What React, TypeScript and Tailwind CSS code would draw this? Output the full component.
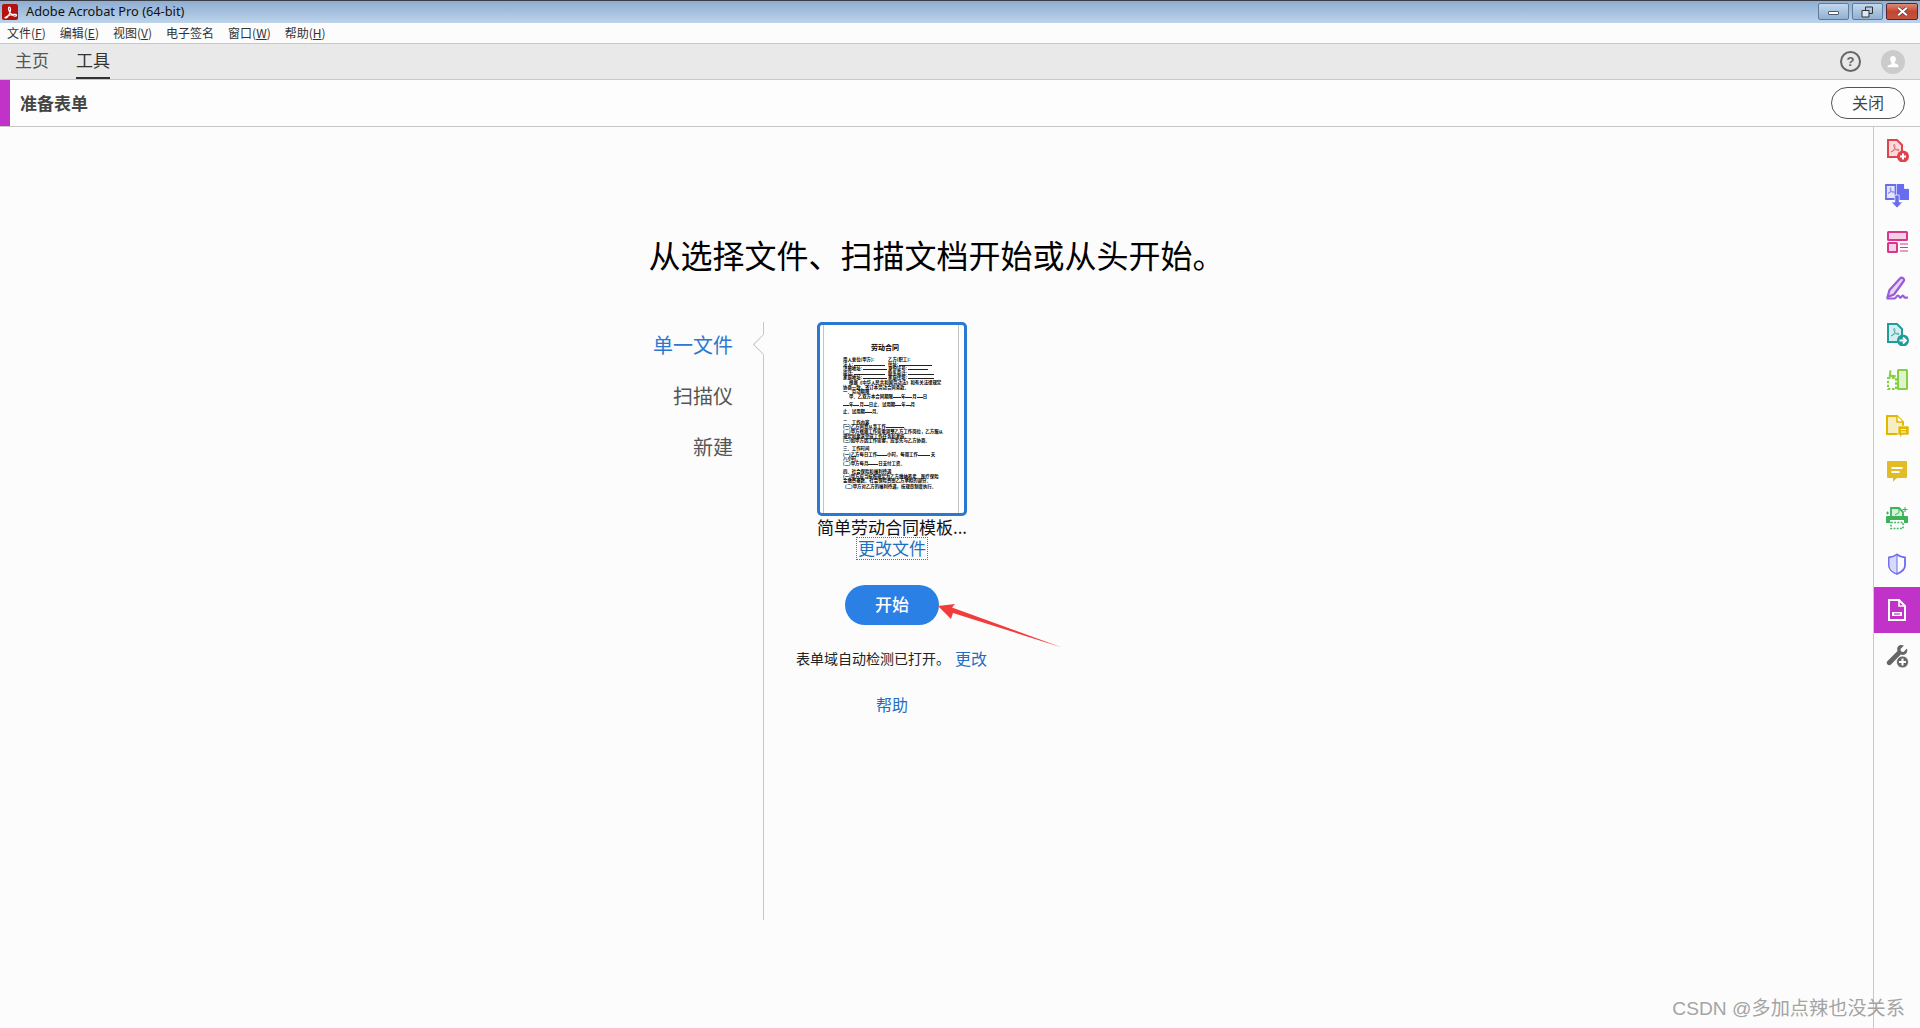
import React from "react";

const cjk = "font-['Noto_Sans_CJK_SC','Noto_Sans',sans-serif]";

const AcroGlyph = ({ color = "#fff", x = 0, y = 0, s = 1, w = 1 }: { color?: string; x?: number; y?: number; s?: number; w?: number }) => (
  <path
    transform={`translate(${x} ${y}) scale(${s})`}
    d="M1 12.5c1.5 1.5 3.5-1 5-4.5 1-2.5 1.3-5.5.3-6.5-1-.8-1.8.6-1.2 2.5.8 2.6 3 5.5 5 6.5 1.5.7 3.4.6 3.4-.4 0-1-2-1.3-4.2-1-2.6.4-6.2 1.6-8.3 3.4z"
    fill="none"
    stroke={color}
    strokeWidth={w}
  />
);

const railIcons: React.ReactNode[] = [
  // create pdf
  <svg key="1" viewBox="0 0 24 24" className="w-6 h-6">
    <path d="M3 2h9l5 5v12H3z" fill="#f9dcde" stroke="#e2434b" strokeWidth="2" />
    <AcroGlyph color="#e2434b" x={5.5} y={5.5} s={0.65} w={1} />
    <circle cx="18" cy="18.5" r="6" fill="#e2434b" />
    <path d="M18 15.5v6M15 18.5h6" stroke="#fff" strokeWidth="2" />
  </svg>,
  // combine
  <svg key="2" viewBox="0 0 24 24" className="w-6 h-6">
    <path d="M1 1h9.500v14H1z" fill="#e4e4fc" stroke="#6a6cf0" strokeWidth="1.800" />
    <AcroGlyph color="#6a6cf0" x={2.500} y={3} s={0.5} w={1.300} />
    <path d="M12 0h7l5 5v11H12z" fill="#6a6cf0" />
    <path d="M19.500 0v4.500H24" fill="#fff" stroke="#fff" strokeWidth="0.800" />
    <path d="M9.800 11h4.400v7h3.500L12 24l-5.700-6h3.500z" fill="#6a6cf0" stroke="#fff" strokeWidth="0.700" />
  </svg>,
  // forms
  <svg key="3" viewBox="0 0 24 24" className="w-6 h-6">
    <rect x="3" y="2" width="19" height="8" rx="0.5" fill="#f5cfe4" stroke="#d8368f" strokeWidth="2" />
    <rect x="3" y="13" width="9" height="9" rx="0.5" fill="#f5cfe4" stroke="#d8368f" strokeWidth="2" />
    <path d="M15 14h8M15 17.5h8M15 21h8" stroke="#d8368f" strokeWidth="1.2" />
  </svg>,
  // sign
  <svg key="4" viewBox="0 0 24 24" className="w-6 h-6">
    <path d="M2.5 21l2-7L15 2.500c1-1 2.200-1 3.200-.2 1 .9 1 2.200.2 3.200L9 18.500z" fill="#e6d4f7" stroke="#9a5bd8" strokeWidth="2.200" strokeLinejoin="round" />
    <path d="M1.500 22.500h8c1.500 0 2-3 3.500-3s1 2.200 2.200 2.200 1.500-2.200 2.700-2.200.8 2.200 2 2.200h3" fill="none" stroke="#9a5bd8" strokeWidth="2.200" />
  </svg>,
  // export
  <svg key="5" viewBox="0 0 24 24" className="w-6 h-6">
    <path d="M3 2h9l5 5v13H3z" fill="#d6eeee" stroke="#1f9c9c" strokeWidth="2" />
    <AcroGlyph color="#1f9c9c" x={5.5} y={5.5} s={0.65} w={1} />
    <circle cx="18" cy="18.5" r="6" fill="#1f9c9c" />
    <path d="M14.500 18.500h6M18 15.500l3 3-3 3" stroke="#fff" strokeWidth="1.800" fill="none" />
  </svg>,
  // organize
  <svg key="6" viewBox="0 0 24 24" className="w-6 h-6">
    <rect x="13" y="2" width="9" height="19" rx="0.5" fill="#dff3cf" stroke="#84d040" strokeWidth="2" />
    <path d="M3 10h8v11H3z" fill="none" stroke="#84d040" strokeWidth="2" strokeDasharray="2.500 1.600" />
    <path d="M11 7.500H5.500M5 2.500v5.500h5.500" fill="none" stroke="#84d040" strokeWidth="2" transform="rotate(8 6 6)" />
  </svg>,
  // pdf comment doc
  <svg key="7" viewBox="0 0 24 24" className="w-6 h-6">
    <path d="M2 2h10l6 6v12H2z" fill="#f6edc4" stroke="#e0b800" strokeWidth="2" />
    <path d="M12 2v6h6" fill="#fff" stroke="#e0b800" strokeWidth="1.500" />
    <path d="M13 12h11v9h-7l-2 3v-3h-2z" fill="#e0b800" stroke="#fff" strokeWidth="0.600" />
    <path d="M16 15.500h5M16 18h5" stroke="#fff" strokeWidth="1" />
  </svg>,
  // comment
  <svg key="8" viewBox="0 0 24 24" className="w-6 h-6">
    <path d="M3 2h18a1 1 0 0 1 1 1v16a1 1 0 0 1-1 1h-9l-4 4v-4H3a1 1 0 0 1-1-1V3a1 1 0 0 1 1-1z" fill="#e2bc24" transform="translate(0 -1) scale(1 0.95)" />
    <path d="M6.500 8h11M6.500 12h8" stroke="#fff" strokeWidth="2" />
  </svg>,
  // print production
  <svg key="9" viewBox="0 0 24 24" className="w-6 h-6">
    <path d="M6 11V2h8l4 4v5" fill="#d6f0da" stroke="#3cb35a" strokeWidth="1.800" />
    <path d="M14 2v4.500L10 9" stroke="#3cb35a" strokeWidth="1" fill="none" />
    <path d="M2 10h20a1 1 0 0 1 1 1v6h-4v-3H5v3H1v-6a1 1 0 0 1 1-1z" fill="#3cb35a" />
    <path d="M6 16.500h12v6H6z" fill="none" stroke="#3cb35a" strokeWidth="1.600" strokeDasharray="1.800 1.400" />
    <path d="M20 1v5M17.500 3.500h5M2.500 5.500v3M1 7h3" stroke="#3cb35a" strokeWidth="1" />
  </svg>,
  // protect
  <svg key="10" viewBox="0 0 24 24" className="w-6 h-6">
    <path d="M12 2.500c2.500 2 5 2.800 8 3v8c0 4-3.500 6.500-8 8.500-4.500-2-8-4.500-8-8.500v-8c3-.2 5.500-1 8-3z" fill="none" stroke="#6a6cf0" strokeWidth="1.800" />
    <path d="M12 2.500v19.500c-4.500-2-8-4.500-8-8.500v-8c3-.2 5.500-1 8-3z" fill="#d8daf9" stroke="#6a6cf0" strokeWidth="1" />
  </svg>,
  // prepare form (selected)
  <svg key="11" viewBox="0 0 24 24" className="w-6 h-6">
    <path d="M4 2h10l6 6v14H4z" fill="none" stroke="#fff" strokeWidth="2" />
    <path d="M14 2v6h6" fill="none" stroke="#fff" strokeWidth="1.600" />
    <path d="M7 14h10v4H7z" fill="#fff" />
    <path d="M9 16h6" stroke="#c032c8" strokeWidth="1.200" />
  </svg>,
  // more tools
  <svg key="12" viewBox="0 0 24 24" className="w-6 h-6">
    <path d="M19 1.500l-3.500 3.500.5 2.500 2.500.5L22 4.500c.8 2.500 0 5-2.200 6-1.500.7-3 .5-4 0L6 20.500c-1 1-2.500 1-3.500 0s-1-2.500 0-3.500L12.500 7c-.5-1.500-.5-3 .3-4.300C14 .8 16.500 .5 19 1.500z" fill="#666" />
    <circle cx="17.500" cy="18" r="6" fill="#666" stroke="#fcfcfc" strokeWidth="0.800" />
    <path d="M17.500 14.500v7M14 18h7" stroke="#fff" strokeWidth="2" />
  </svg>,
];

const Menu = ({ label, k }: { label: string; k?: string }) => (
  <span>
    {label}
    {k && (
      <>
        (<span className="underline">{k}</span>)
      </>
    )}
  </span>
);

// a tiny line of the previewed contract
const Doc = ({ children, className = "" }: { children: React.ReactNode; className?: string }) => (
  <div className={`h-[4px] leading-[4px] text-[4.4px] font-bold text-black whitespace-nowrap ${className}`}>{children}</div>
);

const Blank = ({ w }: { w: string }) => <span className={`inline-block border-b border-[#222] align-baseline ${w}`} />;

const App: React.FC = () => {
  return (
    <div className={`w-full h-[1028px] relative flex flex-col overflow-hidden bg-[#fcfcfc] ${cjk}`}>
      {/* title bar */}
      <div className="h-[23px] shrink-0 flex items-center border-t border-[#3a3f46] bg-gradient-to-b from-[#8eaed2] to-[#bdd3ea] pl-[2px] pr-[2px]">
        <div className="w-[16px] h-[16px] rounded-[2px] bg-[#b3120f] flex items-center justify-center">
          <svg viewBox="0 0 14 14" className="w-[13px] h-[13px]">
            <AcroGlyph w={1.3} />
          </svg>
        </div>
        <span className="ml-[8px] text-[12.8px] text-[#111] font-['Noto_Sans',sans-serif]">Adobe Acrobat Pro (64-bit)</span>
        <div className="ml-auto flex gap-[3px] items-center -mt-[1px]">
          <div className="w-[31px] h-[17px] rounded-[2px] border border-[#5f7b9c] bg-gradient-to-b from-[#c5d8ec] to-[#8fb0d2] flex items-center justify-center">
            <div className="w-[11px] h-[4px] bg-white border border-[#4a5a6c] rounded-[1px] mt-[3px]" />
          </div>
          <div className="w-[31px] h-[17px] rounded-[2px] border border-[#5f7b9c] bg-gradient-to-b from-[#c5d8ec] to-[#8fb0d2] flex items-center justify-center">
            <svg viewBox="0 0 13 12" className="w-[13px] h-[12px]">
              <path d="M4.500 1h7v6.500h-7z" fill="none" stroke="#333" strokeWidth="1" />
              <path d="M1 4.500h7v6.500H1z" fill="#dfe9f4" stroke="#333" strokeWidth="1" />
            </svg>
          </div>
          <div className="w-[32px] h-[17px] rounded-[2px] border border-[#5a2230] bg-gradient-to-b from-[#dd8a78] via-[#c3452e] to-[#c05440] flex items-center justify-center">
            <svg viewBox="0 0 12 10" className="w-[13px] h-[11px]">
              <path d="M2 1.500l8 7M10 1.500l-8 7" stroke="#444" strokeWidth="3" />
              <path d="M2 1.500l8 7M10 1.500l-8 7" stroke="#fff" strokeWidth="1.800" />
            </svg>
          </div>
        </div>
      </div>

      {/* menu bar */}
      <div className="h-[21px] shrink-0 flex items-center gap-[14px] pl-[7px] pb-[1px] bg-[#fcfcfc] border-b border-[#c8c8c8] text-[12px] text-[#333]">
        <Menu label="文件" k="F" />
        <Menu label="编辑" k="E" />
        <Menu label="视图" k="V" />
        <Menu label="电子签名" />
        <Menu label="窗口" k="W" />
        <Menu label="帮助" k="H" />
      </div>

      {/* tab bar */}
      <div className="h-[36px] shrink-0 flex items-stretch pl-[15px] pr-[15px] bg-[#e9e9e9] border-b border-[#c8c8c8] text-[17px]">
        <div className="flex items-center text-[#555] pb-[3px]">主页</div>
        <div className="ml-[27px] flex items-center text-[#333] border-b-2 border-[#333] w-[34px] justify-center pb-[1px]">工具</div>
        <div className="ml-auto flex items-center gap-[20px]">
          <div className="w-[21px] h-[21px] rounded-full border-2 border-[#666] flex items-center justify-center text-[13px] font-bold text-[#666] leading-none font-['Liberation_Sans',sans-serif]">?</div>
          <div className="w-[24px] h-[24px] rounded-full bg-[#cbcbcb] flex items-center justify-center">
            <svg viewBox="0 0 16 16" className="w-[14px] h-[14px]">
              <path d="M8 1c2 0 3.300 1.500 3.300 3.500 0 1.500-.7 3-1.500 3.700v1.300c2.500.7 4.500 1.500 4.500 3V14H1.700v-.5c0-1.500 2-2.300 4.500-3V8.200C5.400 7.500 4.700 6 4.700 4.500 4.700 2.500 6 1 8 1z" fill="#fff" />
            </svg>
          </div>
        </div>
      </div>

      {/* tool header */}
      <div className="h-[47px] shrink-0 flex items-center bg-[#fdfdfd] border-b border-[#c8c8c8] pr-[15px]">
        <div className="w-[10px] h-full bg-[#c032c8]" />
        <span className="ml-[10px] text-[17px] font-bold text-[#444] pb-[1px]">准备表单</span>
        <button className="ml-auto w-[74px] h-[32px] pb-[2px] rounded-full border-[1.5px] border-[#555] text-[16px] text-[#444] flex items-center justify-center">关闭</button>
      </div>

      {/* body */}
      <div className="flex-1 flex min-h-0">
        <div className="flex-1 relative flex flex-col">
          <h1 className="mt-[104px] h-[46px] leading-[46px] text-[32px] font-normal text-black text-center whitespace-nowrap">从选择文件、扫描文档开始或从头开始。</h1>
          <div className="mt-[45px] flex pl-[600px]">
            {/* source list */}
            <div className="relative w-[164px] h-[598px] border-r border-[#c8c8c8] pr-[30px] pt-[8px] text-right text-[20px] text-[#555] flex flex-col gap-[21px]">
              <div className="h-[30px] leading-[30px] text-[#2a78d0]">单一文件</div>
              <div className="h-[30px] leading-[30px]">扫描仪</div>
              <div className="h-[30px] leading-[30px]">新建</div>
              <div className="absolute right-[-8px] top-[15px] w-[15px] h-[15px] rotate-45 bg-[#fcfcfc] border-l border-b border-[#c8c8c8]" />
            </div>

            {/* file column */}
            <div className="ml-[32px] w-[192px] flex flex-col items-center">
              <div className="w-[150px] h-[194px] shrink-0 rounded-[5px] border-[3px] border-[#2a78d0] bg-white overflow-hidden">
                <div className="h-full ml-[3px] mr-[5px] border-x border-[#c4c4c4] pl-[19px] pt-[19px]">
                  <div className="h-[7px] leading-[7px] text-[7px] font-bold text-black pl-[28px] whitespace-nowrap">劳动合同</div>
                  <Doc className="mt-[6px] flex"><span className="w-[45px]">用人单位(甲方):</span><span>乙方(职工):</span></Doc>
                  <Doc className="mt-[1px] flex"><span className="w-[45px]">法人: <Blank w="w-[31px]" /></span><span>住址: <Blank w="w-[33px]" /></span></Doc>
                  <Doc className="flex"><span className="w-[45px]">注册地址: <Blank w="w-[24px]" /></span><span>身份证号: <Blank w="w-[20px]" /></span></Doc>
                  <Doc className="mt-[1px] flex"><span className="w-[45px]">电话: <Blank w="w-[31px]" /></span><span>联系电话: <Blank w="w-[26px]" /></span></Doc>
                  <Doc className="flex"><span className="w-[45px]">家庭地址: <Blank w="w-[24px]" /></span><span>家庭住址: <Blank w="w-[26px]" /></span></Doc>
                  <Doc className="mt-[1px] pl-[6px]">根据《中华人民共和国劳动法》和有关法律规定</Doc>
                  <Doc className="mt-[1px]">协商一致，签订本劳动合同条款。</Doc>
                  <Doc>一、劳动期限</Doc>
                  <Doc className="mt-[1px] pl-[6px]">甲、乙双方本合同期限<Blank w="w-[8px]" />年<Blank w="w-[7px]" />月<Blank w="w-[6px]" />日</Doc>
                  <Doc className="mt-[4px]"><Blank w="w-[6px]" />年<Blank w="w-[6px]" />月<Blank w="w-[5px]" />日止。试用期<Blank w="w-[6px]" />年<Blank w="w-[5px]" />月</Doc>
                  <Doc className="mt-[3px]">止。试用期<Blank w="w-[7px]" />月。</Doc>
                  <Doc className="mt-[7px]">二、工作内容</Doc>
                  <Doc>(一)乙方同意从事工作<Blank w="w-[18px]" />。</Doc>
                  <Doc className="mt-[1px]">(二)甲方根据工作需要调整乙方工作岗位，乙方服从</Doc>
                  <Doc className="mt-[1px]">规定和要求完成工作任务和考核。</Doc>
                  <Doc>(三)如甲方因工作需要，应事先与乙方协商。</Doc>
                  <Doc className="mt-[4px]">三、工作时间</Doc>
                  <Doc className="mt-[2px]">(一)乙方每日工作<Blank w="w-[10px]" />小时，每周工作<Blank w="w-[12px]" /> 天</Doc>
                  <Doc>八小时。</Doc>
                  <Doc className="mt-[1px]">(二)甲方每月<Blank w="w-[10px]" />日支付工资。</Doc>
                  <Doc className="mt-[4px]">四、社会保险和福利待遇</Doc>
                  <Doc className="mt-[1px]">(一)甲方应当按照规定为乙方缴纳养老、医疗保险</Doc>
                  <Doc>金缴费基数。社会保险费由乙方承担的部分。</Doc>
                  <Doc className="mt-[2px] pl-[2px]">(二)甲方对乙方的福利待遇，按规章制度执行。</Doc>
                </div>
              </div>
              <div className="h-[21px] leading-[21px] text-[17px] text-[#111] whitespace-nowrap">简单劳动合同模板...</div>
              <div className="h-[23px] leading-[19px] px-[1px] text-[17px] text-[#1f6fc0] border border-dotted border-[#3f78b8] whitespace-nowrap">更改文件</div>
              <button className="mt-[25px] w-[94px] h-[40px] pb-[2px] rounded-full bg-[#2b80e6] text-white text-[17px] font-medium flex items-center justify-center">开始</button>
              <div className="mt-[21px] h-[24px] w-full flex items-center whitespace-nowrap">
                <span className="text-[14px] text-[#222]">表单域自动检测已打开。</span>
                <span className="ml-[5px] text-[16px] text-[#1f6fc0]">更改</span>
              </div>
              <div className="mt-[22px] h-[24px] leading-[24px] text-[16px] text-[#1f6fc0]">帮助</div>
            </div>
          </div>

          {/* red annotation arrow */}
          <svg className="absolute left-[930px] top-[470px] w-[140px] h-[54px]" viewBox="930 597 140 54">
            <polygon points="938,606 955,604 952,607.500 1062,647.500 953,613 951,619" fill="#f23c3c" />
          </svg>
        </div>

        {/* right tool rail */}
        <div className="w-[47px] shrink-0 border-l border-[#c8c8c8] flex flex-col">
          {railIcons.map((icon, i) => (
            <div key={i} className={`h-[46px] flex items-center justify-center ${i === 10 ? "bg-[#c032c8]" : ""}`}>
              {icon}
            </div>
          ))}
        </div>
      </div>

      {/* watermark */}
      <div className="absolute right-[15px] bottom-[6px] text-[19.2px] leading-[26px] text-[#a4a4a4] whitespace-nowrap font-['Liberation_Sans','Noto_Sans_CJK_SC',sans-serif]">CSDN @多加点辣也没关系</div>
    </div>
  );
};

export default App;
